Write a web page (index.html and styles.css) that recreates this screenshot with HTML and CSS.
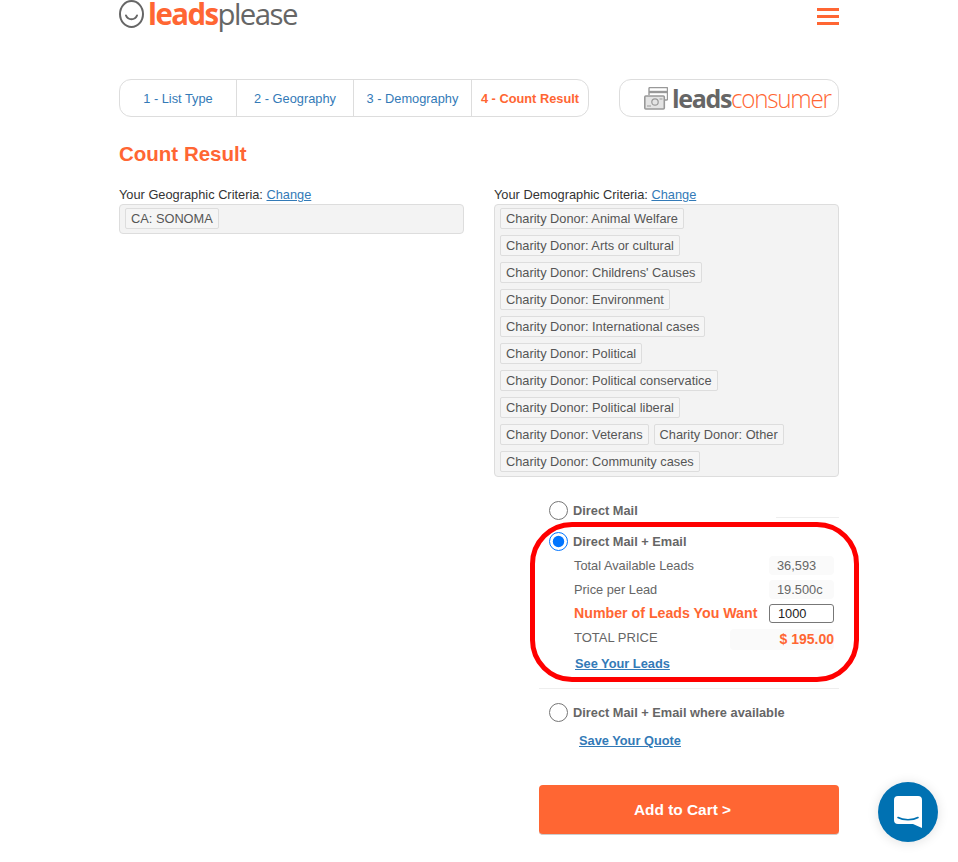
FILE: index.html
```html
<!DOCTYPE html>
<html lang="en">

<head>
    <meta charset="UTF-8">
    <meta name="viewport" content="width=device-width, initial-scale=1.0">
    <title>LeadsPlease - Count Result</title>
    <link rel="stylesheet" href="styles.css">
</head>

<body>
    <div class="page">
        <header class="top">
            <a class="logo" href="#">
                <svg class="logo-face" width="25" height="28" viewBox="0 0 25 28" fill="none" stroke="#666" stroke-width="2">
                    <ellipse cx="12.5" cy="14" rx="11.5" ry="13"></ellipse>
                    <path d="M7 15.5c2 5 9 5 11 0" stroke-linecap="round"></path>
                </svg>
                <span class="logo-text"><b>leads</b>please</span>
            </a>
            <div class="burger"><span></span><span></span><span></span></div>
        </header>

        <div class="nav-row">
            <nav class="steps">
                <a href="#">1 - List Type</a>
                <a href="#">2 - Geography</a>
                <a href="#">3 - Demography</a>
                <a href="#" class="active">4 - Count Result</a>
            </nav>
            <a class="consumer" href="#">
                <svg width="24" height="23" viewBox="0 0 24 23" fill="none" stroke="#999">
                    <path d="M5 8V1.5a1 1 0 0 1 1-1h16.500a1 1 0 0 1 1 1V12a1 1 0 0 1-1 1H21" stroke-width="1.4"></path>
                    <path d="M5 5h18.500" stroke-width="2.400"></path>
                    <rect x="0.800" y="9" width="19.500" height="13" rx="1" fill="#e4e4e4" stroke-width="1.600"></rect>
                    <circle cx="11" cy="15" r="3.200" stroke-width="1.200"></circle>
                    <path d="M3 19h4M15.500 12h3" stroke-width="1.200"></path>
                </svg>
                <span class="consumer-text"><b>leads</b><span class="consumer-word">consumer</span></span>
            </a>
        </div>

        <h1>Count Result</h1>

        <div class="criteria">
            <section>
                <div class="crit-label">Your Geographic Criteria: <a href="#">Change</a></div>
                <div class="tag-box">
                    <div class="tag-row"><span class="tag">CA: SONOMA</span></div>
                </div>
            </section>
            <section>
                <div class="crit-label">Your Demographic Criteria: <a href="#">Change</a></div>
                <div class="tag-box">
                    <div class="tag-row"><span class="tag">Charity Donor: Animal Welfare</span></div>
                    <div class="tag-row"><span class="tag">Charity Donor: Arts or cultural</span></div>
                    <div class="tag-row"><span class="tag">Charity Donor: Childrens' Causes</span></div>
                    <div class="tag-row"><span class="tag">Charity Donor: Environment</span></div>
                    <div class="tag-row"><span class="tag">Charity Donor: International cases</span></div>
                    <div class="tag-row"><span class="tag">Charity Donor: Political</span></div>
                    <div class="tag-row"><span class="tag">Charity Donor: Political conservatice</span></div>
                    <div class="tag-row"><span class="tag">Charity Donor: Political liberal</span></div>
                    <div class="tag-row"><span class="tag">Charity Donor: Veterans</span><span class="tag">Charity Donor: Other</span></div>
                    <div class="tag-row"><span class="tag">Charity Donor: Community cases</span></div>
                </div>
            </section>
        </div>

        <div class="order">
            <div class="option first">
                <label class="radio"><input type="radio" name="product"> Direct Mail</label>
                <div class="short-rule"></div>
            </div>

            <div class="option selected">
                <label class="radio"><input type="radio" name="product" checked> Direct Mail + Email</label>
                <div class="rows">
                    <div class="row"><span>Total Available Leads</span><span class="val">36,593</span></div>
                    <div class="row"><span>Price per Lead</span><span class="val">19.500c</span></div>
                    <div class="row want"><span>Number of Leads You Want</span><input class="qty" type="text" value="1000"></div>
                    <div class="row total"><span>TOTAL PRICE</span><span class="val">$ 195.00</span></div>
                </div>
                <a class="see" href="#">See Your Leads</a>
                <div class="annotation"></div>
            </div>

            <div class="option last">
                <label class="radio"><input type="radio" name="product"> Direct Mail + Email where available</label>
                <a class="save" href="#">Save Your Quote</a>
            </div>

            <button class="cart">Add to Cart &gt;</button>
        </div>
    </div>

    <div class="chat">
        <svg width="28" height="32" viewBox="0 0 28 32">
            <path d="M4 0h20a4 4 0 0 1 4 4v28l-9-4H4a4 4 0 0 1-4-4V4a4 4 0 0 1 4-4z" fill="#fff"></path>
            <path d="M4 21.500c5 3 15 3 20 0" fill="none" stroke="#0071b2" stroke-width="1.600" stroke-linecap="round"></path>
        </svg>
    </div>
</body>

</html>
```

FILE: styles.css
```css
:root {
    --orange: #ff6633;
    --blue: #337ab7;
    --line: #ddd;
    --text: #666;
}

* {
    box-sizing: border-box;
}

body {
    margin: 0;
    height: 862px;
    overflow: hidden;
    font-family: "Liberation Sans", Arial, sans-serif;
    font-size: 12.8px;
    color: #333;
    background-color: #fff;
}

a {
    color: var(--blue);
}

.page {
    width: 720px;
    margin: 0 0 0 119px;
}

.top {
    display: flex;
    justify-content: space-between;
    align-items: flex-start;
    height: 79px;
}

.logo {
    display: flex;
    align-items: flex-start;
    gap: 4px;
    text-decoration: none;
}

.logo-text {
    display: inline-block;
    font-family: "Open Sans", sans-serif;
    font-size: 30px;
    line-height: 28px;
    letter-spacing: -1.6px;
    color: #666;
    transform: scaleX(0.98);
    transform-origin: left;
}

.logo-text b {
    color: var(--orange);
    font-weight: 700;
}

.burger {
    width: 22px;
    margin-top: 8px;
    display: flex;
    flex-direction: column;
    gap: 4px;
}

.burger span {
    height: 3px;
    background-color: var(--orange);
}

.nav-row {
    display: flex;
    justify-content: space-between;
    height: 38px;
}

.steps {
    display: grid;
    grid-template-columns: 116px 117px 118px 117px;
    width: 470px;
    border: 1px solid var(--line);
    border-radius: 12px;
}

.steps a {
    display: flex;
    align-items: center;
    justify-content: center;
    white-space: nowrap;
    text-decoration: none;
    border-left: 1px solid var(--line);
}

.steps a:first-child {
    border-left: none;
}

.steps .active {
    color: var(--orange);
    font-weight: 700;
}

.consumer {
    width: 220px;
    display: flex;
    align-items: center;
    gap: 4px;
    padding-left: 24px;
    border: 1px solid var(--line);
    border-radius: 12px;
    text-decoration: none;
}

.consumer-text {
    display: flex;
    font-family: "Open Sans", sans-serif;
    font-size: 25px;
    letter-spacing: -1.3px;
    color: var(--orange);
}

.consumer-text b {
    color: #666;
}

.consumer-word {
    display: inline-block;
    font-weight: 300;
    transform: scaleX(0.97);
    transform-origin: left;
}

h1 {
    margin: 25px 0 0;
    font-size: 20.5px;
    line-height: 24px;
    color: var(--orange);
}

.criteria {
    display: flex;
    gap: 30px;
    margin-top: 20px;
}

.criteria section {
    flex: 1;
}

.crit-label {
    line-height: 18px;
}

.tag-box {
    display: flex;
    flex-direction: column;
    gap: 6px;
    padding: 3px 5px 4px;
    background-color: #f3f3f3;
    border: 1px solid var(--line);
    border-radius: 4px;
}

.tag-row {
    display: flex;
    gap: 5px;
}

.tag {
    height: 21px;
    padding: 0 5px;
    line-height: 19px;
    color: #555;
    background-color: #f5f5f5;
    border: 1px solid #ddd;
    border-radius: 2px;
}

.order {
    width: 300px;
    margin: 23px 0 0 420px;
}

.radio {
    display: flex;
    align-items: center;
    gap: 5px;
    height: 20px;
    padding-left: 10px;
    font-weight: 700;
    color: var(--text);
}

.radio input {
    width: 19px;
    height: 19px;
    margin: 0;
}

.option {
    position: relative;
}

.short-rule {
    width: 63px;
    height: 1px;
    margin: -3px 0 0 237px;
    background-color: #eee;
}

.selected {
    margin-top: 13px;
    padding-bottom: 16px;
    border-bottom: 1px solid #eee;
}

.rows {
    margin-top: 2px;
}

.row {
    display: flex;
    justify-content: space-between;
    align-items: center;
    height: 24px;
    padding: 0 5px 0 35px;
    color: var(--text);
}

.val {
    width: 65px;
    height: 19px;
    padding-left: 8px;
    line-height: 19px;
    background-color: #fafafa;
    border-radius: 4px;
}

.want {
    font-size: 14.2px;
    font-weight: 700;
    color: var(--orange);
}

.qty {
    width: 65px;
    height: 19px;
    padding: 0 8px;
    font-family: inherit;
    font-size: 12.8px;
    color: #222;
    border: 1px solid #777;
    border-radius: 3px;
}

.total {
    font-size: 13px;
}

.total .val {
    width: 104px;
    height: 21px;
    margin-top: 4px;
    padding: 0;
    text-align: right;
    line-height: 21px;
    font-size: 14px;
    font-weight: 700;
    color: var(--orange);
}

.see,
.save {
    display: block;
    font-weight: 700;
    line-height: 16px;
}

.see {
    margin: 7px 0 0 36px;
}

.annotation {
    position: absolute;
    left: -9px;
    top: -9px;
    width: 329px;
    height: 160px;
    border: 5px solid #f00;
    border-radius: 42px;
}

.last {
    margin-top: 13px;
}

.save {
    margin: 11px 0 0 40px;
}

.cart {
    display: block;
    width: 300px;
    height: 50px;
    margin-top: 36px;
    padding: 0 13px 0 0;
    font-family: inherit;
    font-size: 15.4px;
    font-weight: 700;
    color: #fff;
    background-color: var(--orange);
    border: none;
    border-bottom: 1px solid #ccc;
    border-radius: 4px;
}

.chat {
    position: fixed;
    left: 878px;
    top: 782px;
    width: 60px;
    height: 60px;
    display: flex;
    align-items: center;
    justify-content: center;
    background-color: #0071b2;
    border-radius: 50%;
    box-shadow: 0 1px 12px rgba(0, 0, 0, 0.12);
}
```
